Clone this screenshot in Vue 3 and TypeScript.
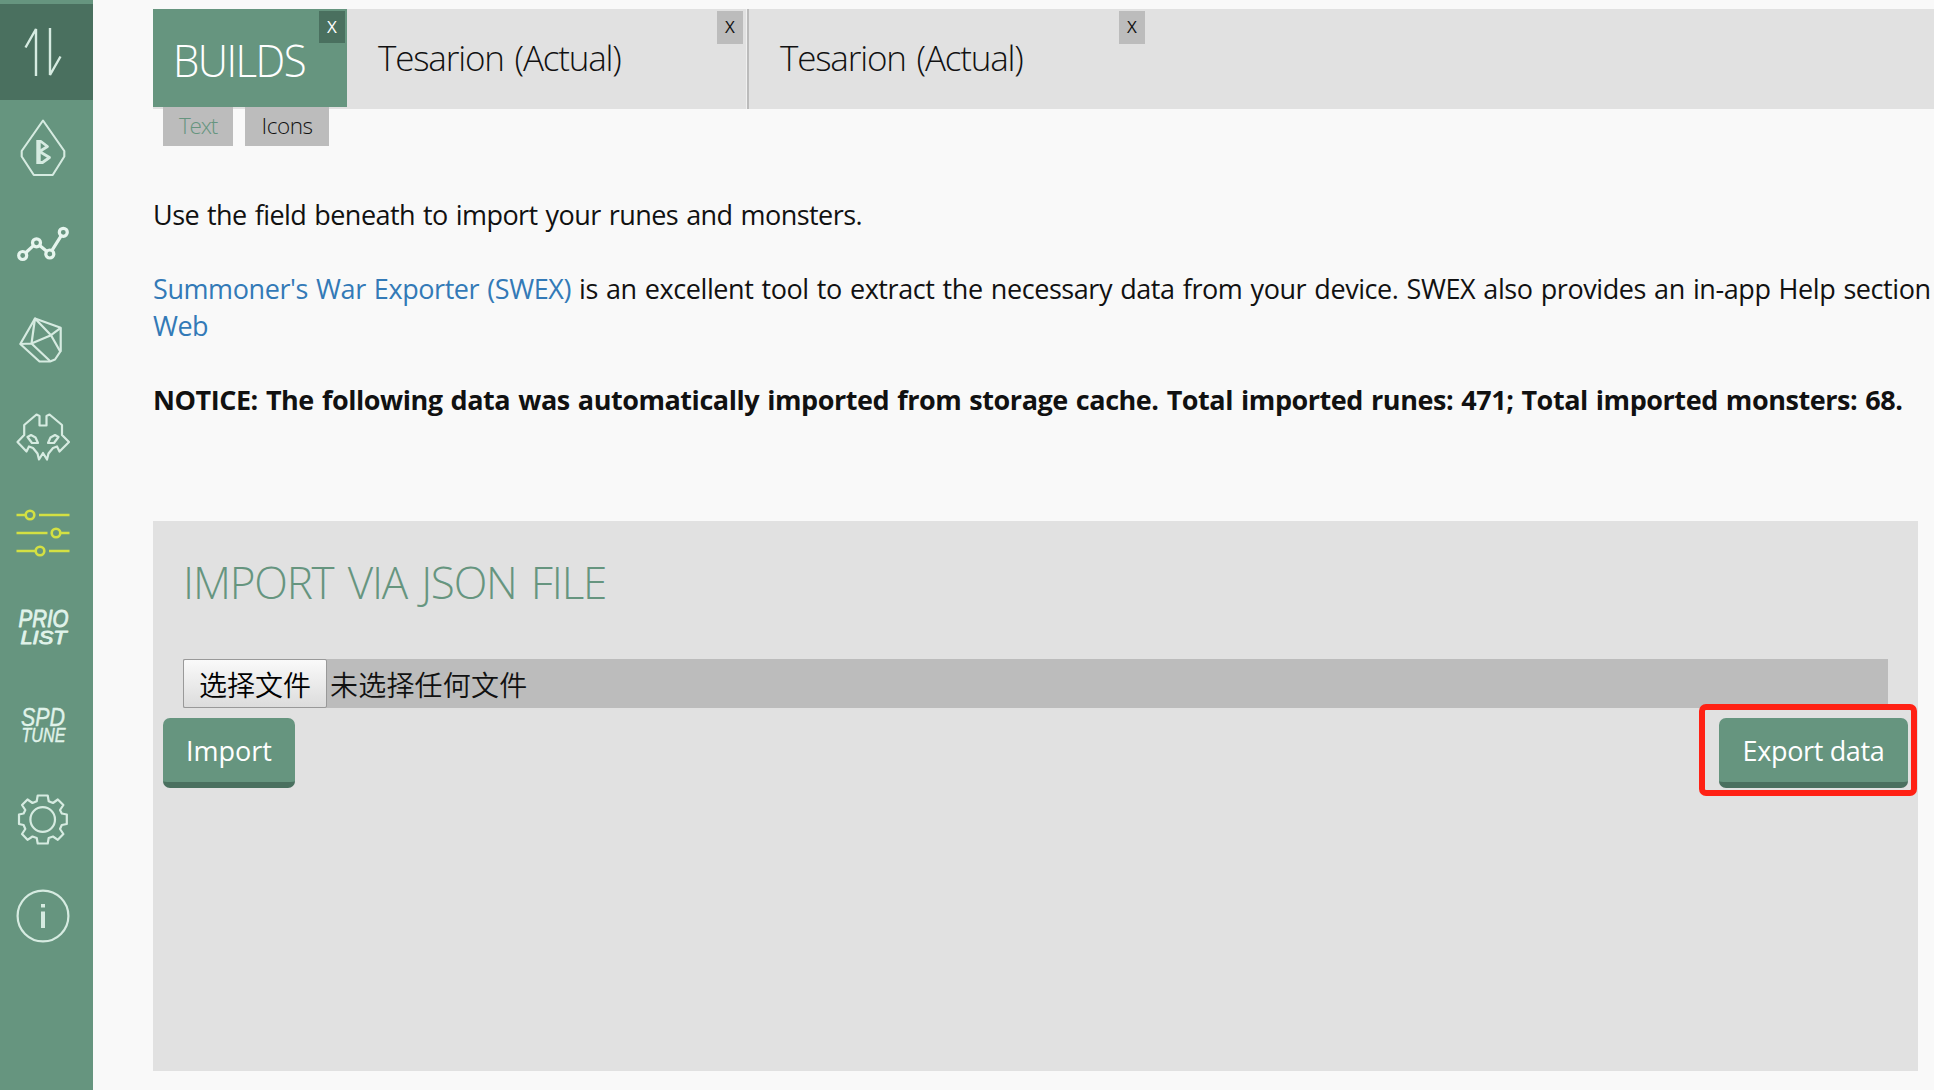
<script setup lang="ts">
interface Tab { id: number; label: string }

const tabs: Tab[] = [
  { id: 1, label: 'Tesarion (Actual)' },
  { id: 2, label: 'Tesarion (Actual)' },
]
</script>

<template>
  <div class="page">
    <nav class="sidebar">
      <a class="nav active">
        <svg viewBox="0 0 93 96"><path d="M25.5 43.5 36 25V72M50 24V71L60.5 52.5" stroke-width="2.4" stroke-linejoin="bevel" /></svg>
      </a>
      <a class="nav">
        <svg viewBox="0 0 93 96">
          <path d="M43 20.5 64.3 51V56.5L52.7 75H33.8L21.7 56.5V51Z" stroke-width="2.1" />
          <path d="M38.5 40V63.5M37 41.5H41L47.5 46.5 39.5 51.5 49.5 57.5 42.5 62.5H37" stroke-width="2.8" />
          <path d="M38.5 40V64" stroke-width="4.4" />
        </svg>
      </a>
      <a class="nav">
        <svg viewBox="0 0 93 96" class="heavy">
          <circle cx="22.7" cy="59.5" r="4" /><circle cx="36.5" cy="46.8" r="4" />
          <circle cx="49.8" cy="58" r="4" /><circle cx="63.3" cy="36.3" r="4" />
          <path d="M26 56.5 33.4 49.6M39.7 49.5 46.6 55.3M52 54.4 61.1 39.9" />
        </svg>
      </a>
      <a class="nav">
        <svg viewBox="0 0 93 96">
          <path d="M35 26.5 60.7 35.8V59L55 67.5 50 69.5H39.5L20.3 52Z" />
          <path d="M20.3 52 31.5 51.5 35 26.5 51 43.2 31.5 51.5 50 69M51 43.2 60.7 35.8M51 43.2 60.5 60" />
        </svg>
      </a>
      <a class="nav">
        <svg viewBox="0 0 93 96">
          <path d="M43 37.5H39.5V28L36.5 26.5 24.2 37V47L17.5 54 26.5 63.5 29 58.5 33 60 37.5 65.5 39 71.5 43 65 47 71.5 48.5 65.5 53 60 57 58.5 59.5 63.5 69 54 62 47V37L49.5 26.5 46.5 28V37.5H43" />
          <path d="M27.5 49 31 47 35.5 49.5 38 55H32ZM58.5 49 55 47 50.5 49.5 48 55H54Z" />
        </svg>
      </a>
      <a class="nav">
        <svg viewBox="0 0 93 96" class="lime">
          <path d="M16.5 31H25M39 31H69.5M16.5 49H47.5M61 49H69.5M16.5 67H35M49 67H69.5" />
          <circle cx="30" cy="31" r="4.3" /><circle cx="56" cy="49" r="4.3" /><circle cx="40" cy="67" r="4.3" />
        </svg>
      </a>
      <a class="nav">
        <svg viewBox="0 0 93 96" class="word semi">
          <text x="18.5" y="47" font-size="24.5" textLength="50" lengthAdjust="spacingAndGlyphs">PRIO</text>
          <text x="20.5" y="63.5" font-size="19" textLength="46" lengthAdjust="spacingAndGlyphs">LIST</text>
        </svg>
      </a>
      <a class="nav">
        <svg viewBox="0 0 93 96" class="word light">
          <text x="21" y="49.5" font-size="25" textLength="44" lengthAdjust="spacingAndGlyphs">SPD</text>
          <text x="21.5" y="66" font-size="19.5" textLength="44" lengthAdjust="spacingAndGlyphs">TUNE</text>
        </svg>
      </a>
      <a class="nav">
        <svg viewBox="0 0 93 96">
          <circle cx="42.7" cy="47.5" r="12.3" />
          <path d="M37.7 23.5H47.7L48.7 29.2 53 31 57.8 27.5 63.4 33 60 38 61.8 41.5 66.8 42.5V52L61.8 53 60 57 63.4 62 57.8 67.8 53 64.5 48.7 66 47.7 71.5H37.7L36.7 66 32.5 64.5 27.5 67.8 22 62 25.3 57 23.6 53 19 52V42.5L23.6 41.5 25.3 38 22 33 27.5 27.5 32.5 31 36.7 29.2Z" />
        </svg>
      </a>
      <a class="nav">
        <svg viewBox="0 0 93 96">
          <circle cx="43" cy="48" r="25.4" />
          <path d="M43 36V39.5M43 43.5V60" stroke-width="4" />
        </svg>
      </a>
    </nav>

    <main class="content">
      <header class="tabs">
        <div class="builds">
          <span class="builds-label">BUILDS</span>
          <button class="close">X</button>
        </div>
        <div v-for="tab in tabs" :key="tab.id" class="tab">
          <span>{{ tab.label }}</span>
          <button class="close">X</button>
        </div>
      </header>
      <div class="modes">
        <button class="mode chosen">Text</button>
        <button class="mode">Icons</button>
      </div>

      <div class="intro">
        <p>Use the field beneath to import your runes and monsters.</p>
        <p><a class="swex">Summoner's War Exporter (SWEX)</a> <span class="rest">is an excellent tool to extract the necessary data from your device. SWEX also provides an in-app Help section</span><br><a>Web</a></p>
        <p class="notice">NOTICE: The following data was automatically imported from storage cache. Total imported runes: 471; Total imported monsters: 68.</p>
      </div>

      <section class="panel">
        <h2>IMPORT VIA JSON FILE</h2>
        <div class="file">
          <button class="choose">选择文件</button>
          <span class="chosen-file">未选择任何文件</span>
        </div>
        <div class="actions">
          <button class="btn import">Import</button>
          <div class="export-wrap">
            <button class="btn export">Export data</button>
            <div class="marker"></div>
          </div>
        </div>
      </section>
    </main>
  </div>
</template>

<style>
body { margin: 0; overflow: hidden; background: #f9f9f9; }
</style>

<style scoped>
.page {
  display: flex;
  height: 1090px;
  overflow: hidden;
  background: #f9f9f9;
  color: #111;
  font-family: "Open Sans", "Noto Sans CJK SC", sans-serif;
}
.page * { box-sizing: border-box; }
button { border: 0; margin: 0; padding: 0; font-family: inherit; color: inherit; }

.sidebar {
  flex: none;
  width: 93px;
  padding-top: 4px;
  background: #66957f;
}
.nav { display: block; height: 96px; }
.nav.active { background: #4a705f; }
.nav svg {
  display: block;
  width: 93px;
  height: 96px;
  fill: none;
  stroke: #d6ebe1;
  stroke-width: 2.2;
  stroke-linejoin: round;
}
.nav .heavy { stroke-width: 3.2; stroke: #e6f5ee; }
.nav .lime { stroke: #d3e043; stroke-width: 2.6; }
.nav .word {
  fill: #e0f3ea;
  stroke: #e0f3ea;
  font-family: "Liberation Sans", sans-serif;
  font-style: italic;
}
.nav .semi { stroke-width: 0.9; }
.nav .light { stroke-width: 0.4; }

.content { flex: 1; min-width: 0; padding: 9px 0 0 60px; }
.tabs { display: flex; height: 100px; background: #e1e1e1; }
.builds {
  position: relative;
  width: 194px;
  height: 98px;
  padding-left: 20px;
  background: #66957f;
  color: #fff;
}
.builds-label {
  display: block;
  font-size: 44px;
  font-weight: 300;
  line-height: 60px;
  padding-top: 21px;
  letter-spacing: -1.6px;
  transform: scaleX(0.955);
  transform-origin: left;
}
.tab {
  position: relative;
  width: 402px;
  padding: 16px 0 0 31px;
  font-size: 35px;
  font-weight: 300;
  line-height: 66px;
  letter-spacing: -1.18px;
  word-spacing: 3px;
  white-space: nowrap;
}
.tab:nth-child(2) { border-right: 2px solid #bbb; box-shadow: inset -1px 0 #f0f0f0; }
.close {
  position: absolute;
  top: 2px;
  right: 4px;
  width: 26px;
  height: 33px;
  padding-bottom: 2px;
  background: #bcbcbc;
  font-size: 17px;
  line-height: 31px;
  text-align: center;
}
.tab:nth-child(3) .close { right: 6px; }
.builds .close { right: 2px; height: 32px; background: #4a705f; }

.modes { display: flex; gap: 12px; margin-top: -2px; padding-left: 10px; }
.mode {
  width: 70px;
  height: 39px;
  padding-bottom: 1px;
  background: #bcbcbc;
  font-size: 22.5px;
  font-weight: 300;
  line-height: 36px;
  letter-spacing: -0.5px;
}
.mode:last-child { width: 84px; }
.mode.chosen { color: #66957f; letter-spacing: -1.2px; }

.intro {
  height: 325px;
  margin-top: 50px;
  font-size: 27px;
  line-height: 37px;
  letter-spacing: -0.55px;
  word-spacing: 1.5px;
  white-space: nowrap;
}
.intro p { margin: 0 0 37px; }
.intro a { color: #337ab7; }
.intro .swex { letter-spacing: -0.42px; }
.rest { letter-spacing: -0.42px; }
.notice { font-weight: 700; letter-spacing: -0.456px; }

.panel {
  width: 1765px;
  height: 550px;
  padding: 31px 30px 0;
  background: #e1e1e1;
}
h2 {
  margin: 0;
  height: 107px;
  color: #66957f;
  font-size: 44px;
  font-weight: 300;
  line-height: 60px;
  letter-spacing: -1.2px;
  word-spacing: 4px;
}
.file { display: flex; align-items: stretch; height: 49px; background: #bcbcbc; }
.choose {
  width: 144px;
  border: 1px solid #999;
  border-radius: 2px;
  background: linear-gradient(#fafafa, #dcdcdc);
  color: #000;
  font: 350 28px/44px "Noto Sans CJK SC", sans-serif;
}
.chosen-file { padding-left: 3px; font: 350 28px/51px "Noto Sans CJK SC", sans-serif; letter-spacing: 0.2px; }
.actions { display: flex; justify-content: space-between; margin: 10px -30px 0 -20px; }
.btn {
  display: block;
  height: 70px;
  border-bottom: 6px solid #4a705f;
  border-radius: 7px;
  background: #66957f;
  color: #fff;
  font-size: 27px;
}
.import { width: 132px; }
.export { width: 189px; letter-spacing: -0.35px; }
.export-wrap { position: relative; margin-right: 10px; }
.marker {
  position: absolute;
  inset: -14px -9px -8px -20px;
  border: 6px solid #ff2114;
  border-radius: 7px;
}
</style>
